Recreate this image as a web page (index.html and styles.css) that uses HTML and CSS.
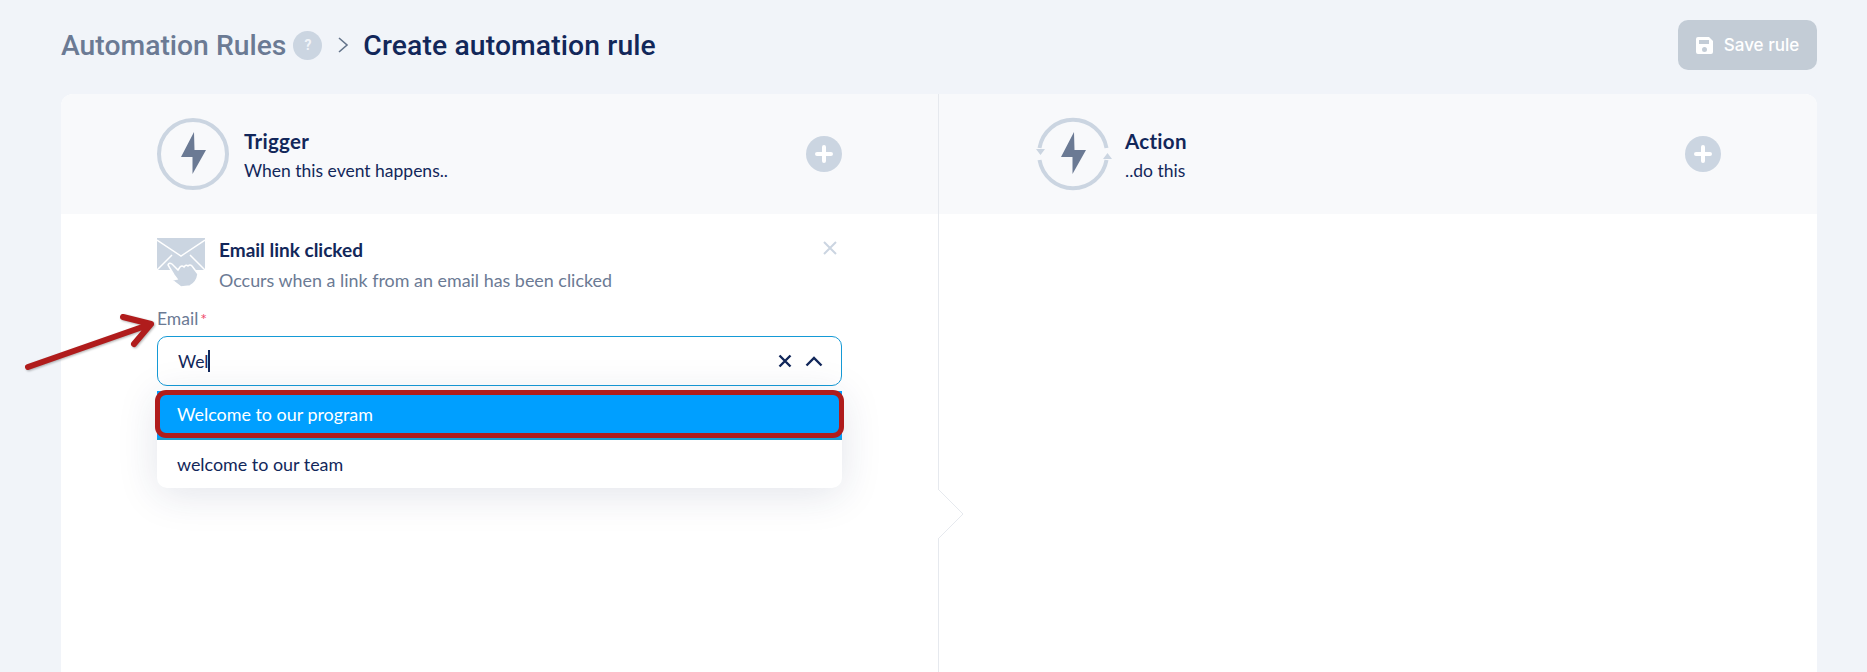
FILE: index.html
```html
<!DOCTYPE html>
<html lang="en">
<head>
    <meta charset="UTF-8">
    <title>Create automation rule</title>
    <link rel="stylesheet" href="styles.css">
</head>
<body>
    <div class="topbar">
        <div class="crumbs">
            <span class="crumb-parent">Automation Rules</span>
            <span class="help">?</span>
            <svg class="crumb-sep" width="12" height="18" viewBox="0 0 12 18"><path d="M2 2l8 7-8 7" fill="none" stroke="#64748b" stroke-width="1.6"/></svg>
            <span class="crumb-current">Create automation rule</span>
        </div>
        <button class="save-btn">
            <svg width="17" height="17" viewBox="0 0 17 17"><path fill-rule="evenodd" d="M2 0h11l4 4v11a2 2 0 0 1-2 2H2a2 2 0 0 1-2-2V2a2 2 0 0 1 2-2zm1 3v4h10V3zm5.500 7a2.500 2.500 0 1 0 0 5 2.500 2.500 0 0 0 0-5z" fill="#fff"/></svg>
            Save rule
        </button>
    </div>

    <div class="card">
        <div class="col col-left">
            <div class="col-head">
                <div class="head-info">
                    <svg class="head-icon" width="72" height="72" viewBox="0 0 72 72">
                        <circle cx="36" cy="36" r="34" fill="none" stroke="#cbd5e1" stroke-width="4"/>
                        <path d="M37 14L24 39h11.500v17L49 32H37.500z" fill="#6b7a94"/>
                    </svg>
                    <div class="head-text">
                        <div class="head-title">Trigger</div>
                        <div class="head-sub">When this event happens..</div>
                    </div>
                </div>
                <span class="add-btn">
                    <svg width="18" height="18" viewBox="0 0 18 18"><path d="M9 2v14M2 9h14" stroke="#fff" stroke-width="4" stroke-linecap="round"/></svg>
                </span>
            </div>
            <div class="col-body">
                <div class="event">
                    <svg class="event-icon" width="48" height="49" viewBox="0 0 48 49">
                        <rect width="48" height="32" fill="#cbd5e1"/>
                        <path d="M0 2l24 16L48 2M0 32l15-15M48 32L33 17" fill="none" stroke="#fff" stroke-width="1.500"/>
                        <path d="M11 27q1-3 4-1l6 6 2-3q2-2 4 0 2-3 4-1 2-2 4 0l6 8q-1 8-8 12l-9 1-9-7 5-1-3-4z" fill="#cbd5e1" stroke="#fff" stroke-width="1.500"/>
                    </svg>
                    <div class="event-text">
                        <div class="event-title">Email link clicked</div>
                        <div class="event-sub">Occurs when a link from an email has been clicked</div>
                    </div>
                    <svg class="event-close" width="14" height="14" viewBox="0 0 14 14"><path d="M1 1l12 12M13 1L1 13" stroke="#cbd5e1" stroke-width="2"/></svg>
                </div>
                <label class="field-label">Email<span class="req">*</span></label>
                <div class="select-box">
                    <span class="select-value">Wel</span><span class="caret"></span>
                    <svg class="select-clear" width="14" height="14" viewBox="0 0 14 14"><path d="M1.500 1.500l11 11M12.500 1.500l-11 11" stroke="#12275a" stroke-width="2.400"/></svg>
                    <svg class="select-arrow" width="18" height="11" viewBox="0 0 18 11"><path d="M1.500 9.500L9 2l7.500 7.500" fill="none" stroke="#12275a" stroke-width="2.400"/></svg>
                </div>
                <div class="options">
                    <div class="option active">Welcome to our program</div>
                    <div class="option">welcome to our team</div>
                </div>
                <div class="highlight"></div>
            </div>
            <svg class="arrow" width="140" height="66" viewBox="0 0 140 66">
                <path d="M8 57L131 14M103 7l28 7-17 20" fill="none" stroke="#b01c1c" stroke-width="6" stroke-linecap="round" stroke-linejoin="round"/>
            </svg>
        </div>
        <div class="col col-right">
            <div class="col-head">
                <div class="head-info">
                    <svg class="head-icon" width="72" height="72" viewBox="0 0 72 72">
                        <path d="M2.500 30A34 34 0 0 1 69.500 30M69.500 42A34 34 0 0 1 2.500 42" fill="none" stroke="#cbd5e1" stroke-width="4"/>
                        <path d="M-1 31h9l-4.500 6zM66 41h9l-4.500-6z" fill="#cbd5e1"/>
                        <path d="M37 14L24 39h11.500v17L49 32H37.500z" fill="#6b7a94"/>
                    </svg>
                    <div class="head-text">
                        <div class="head-title">Action</div>
                        <div class="head-sub">..do this</div>
                    </div>
                </div>
                <span class="add-btn">
                    <svg width="18" height="18" viewBox="0 0 18 18"><path d="M9 2v14M2 9h14" stroke="#fff" stroke-width="4" stroke-linecap="round"/></svg>
                </span>
            </div>
            <svg class="notch" width="26" height="52" viewBox="0 0 26 52"><path d="M0 1l25 25L0 51z" fill="#fff"/><path d="M0 1l25 25L0 51" fill="none" stroke="#e6e9ee"/></svg>
        </div>
    </div>
</body>
</html>
```

FILE: styles.css
```css
* {
    box-sizing: border-box;
}
html, body {
    height: 100%;
}
body {
    margin: 0;
    padding: 0 50px 0 61px;
    background-color: #f1f4f9;
    font-family: 'Lato', 'Noto Sans', sans-serif;
    color: #12275a;
    overflow: hidden;
    display: flex;
    flex-direction: column;
}
.topbar {
    height: 94px;
    flex: none;
    display: flex;
    justify-content: space-between;
    align-items: flex-start;
    padding-top: 20px;
}
.crumbs {
    display: flex;
    align-items: center;
    height: 50px;
    font-family: 'Roboto', sans-serif;
    font-weight: 500;
    font-size: 28.300px;
}
.crumb-parent {
    color: #6b7a94;
}
.help {
    width: 29px;
    height: 29px;
    margin-left: 7px;
    border-radius: 50%;
    background-color: #cbd5e1;
    color: #f1f4f9;
    font-size: 14px;
    font-weight: 700;
    display: flex;
    align-items: center;
    justify-content: center;
}
.crumb-sep {
    margin: 0 14px 0 15px;
}
.crumb-current {
    color: #12275a;
    letter-spacing: 0.120px;
}
.save-btn {
    width: 139px;
    height: 50px;
    border: none;
    border-radius: 10px;
    background-color: #c3ccd6;
    color: #fff;
    font-family: 'Inter', sans-serif;
    font-weight: 500;
    font-size: 17px;
    display: flex;
    align-items: center;
    justify-content: center;
    gap: 11px;
}
.card {
    flex: 1;
    display: grid;
    grid-template-columns: 878px 878px;
    background-color: #fff;
    border-radius: 12px 12px 0 0;
}
.col {
    position: relative;
}
.col-left {
    border-right: 1px solid #e6e9ee;
}
.col-head {
    height: 120px;
    padding: 0 96px;
    background-color: #f8f9fb;
    display: flex;
    align-items: center;
    justify-content: space-between;
}
.col-left .col-head {
    border-radius: 12px 0 0 0;
}
.col-right .col-head {
    border-radius: 0 12px 0 0;
    padding-left: 98px;
}
.head-icon {
    overflow: visible;
}
.head-info {
    display: flex;
    align-items: center;
    gap: 15px;
}
.col-right .head-info {
    gap: 16px;
}
.head-text {
    margin-top: 3px;
}
.head-title {
    font-size: 20.500px;
    font-weight: 700;
    letter-spacing: 0.300px;
    line-height: 24px;
}
.head-sub {
    font-size: 17.500px;
    line-height: 24px;
    margin-top: 6px;
}
.add-btn {
    width: 36px;
    height: 36px;
    border-radius: 50%;
    background-color: #cbd5e1;
    display: flex;
    align-items: center;
    justify-content: center;
}
.col-body {
    position: relative;
    padding: 24px 0 0 96px;
    width: 781px;
}
.event {
    display: flex;
    position: relative;
    gap: 14px;
}
.event-icon {
    flex: none;
}
.event-title {
    font-size: 19px;
    font-weight: 700;
    line-height: 24px;
}
.event-sub {
    font-size: 17.900px;
    color: #6b7a94;
    line-height: 24px;
    margin-top: 6px;
}
.event-close {
    position: absolute;
    right: 5px;
    top: 3px;
}
.field-label {
    display: block;
    margin-top: 17px;
    font-size: 17.500px;
    line-height: 20px;
    color: #6b7a94;
}
.req {
    color: #ef4b6c;
    margin-left: 2px;
    font-size: 16px;
}
.select-box {
    height: 50px;
    margin-top: 7px;
    padding: 0 18px 0 20px;
    border: 1px solid #159ad6;
    border-radius: 10px;
    background-color: #fff;
    display: flex;
    align-items: center;
    font-size: 17.500px;
}
.caret {
    width: 2px;
    height: 22px;
    margin-left: -1px;
    background-color: #12275a;
}
.select-clear {
    margin-left: auto;
    margin-right: 13px;
}
.options {
    position: relative;
    margin-top: 5px;
    border-radius: 0 0 10px 10px;
    background-color: #fff;
    box-shadow: 0 6px 40px rgba(30, 50, 90, 0.13);
}
.option {
    height: 48px;
    padding: 0 20px;
    font-size: 17.900px;
    display: flex;
    align-items: center;
}
.option.active {
    height: 49px;
    background-color: #009fff;
    color: #fff;
    border-bottom: 2px solid #1a9ad0;
    padding-bottom: 1px;
}

/* annotation drawn over the screenshot */
.highlight {
    position: absolute;
    left: 94px;
    top: 176px;
    width: 689px;
    height: 48px;
    border: 5px solid #b01c1c;
    border-radius: 11px;
}
.arrow {
    position: absolute;
    left: -41px;
    top: 216px;
    z-index: 2;
    filter: drop-shadow(1px 1px 1px rgba(0, 0, 0, 0.3));
}
.notch {
    position: absolute;
    left: -1px;
    top: 394px;
}
```
